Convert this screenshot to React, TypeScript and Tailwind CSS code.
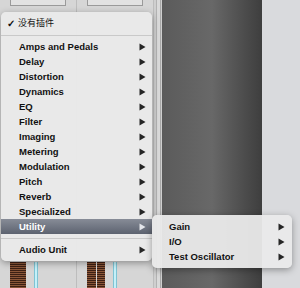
import React from "react";

const FONT = { fontFamily: '"Liberation Sans", Arial, sans-serif' };
const CJK = { fontFamily: '"Liberation Sans", "Noto Sans CJK SC", sans-serif' };

function Arrow({ light }: { light?: boolean }) {
  return (
    <svg width="7" height="8" viewBox="0 0 7 8" className="shrink-0">
      <polygon points="0.5,0.5 6.5,4 0.5,7.5" fill={light ? "#e4e6ea" : "#262626"} />
    </svg>
  );
}

function Item({ label, active, sub }: { label: string; active?: boolean; sub?: boolean }) {
  return (
    <div
      className={
        "flex h-[15px] items-center justify-between text-[9.5px] font-bold " +
        (sub ? "pl-[17px] pr-[7px] " : "pl-[18px] pr-[6px] ") +
        (active
          ? "bg-gradient-to-b from-[#878c97] to-[#5d6370] text-white"
          : "text-[#111111]")
      }
      style={FONT}
    >
      <span className="leading-none">{label}</span>
      <Arrow light={active} />
    </div>
  );
}

function Sep() {
  return (
    <div className="flex h-[8px] items-center">
      <div className="h-px w-full bg-[#c9c9c9]" />
    </div>
  );
}

function Meter({ w }: { w: string }) {
  return (
    <div
      className={"h-full " + w}
      style={{
        backgroundImage:
          "repeating-linear-gradient(to bottom, #3c2014 0px, #3c2014 1px, #8a5638 1px, #8a5638 2px)",
      }}
    />
  );
}

function Strip({ meters }: { meters: number }) {
  return (
    <div className="flex h-full w-[77px] flex-col justify-between border-r border-[#bdbdbd]">
      <div className="flex flex-col items-start pl-[10px]">
        <div className="h-[6px] w-[56px] border-x border-b border-[#9a9a9a] bg-[#e2e2e2]" />
      </div>
      <div className="flex h-[26px] items-stretch gap-[8px] pl-[10px]">
        <div className="flex gap-[1px]">
          {meters === 1 ? (
            <Meter w="w-[16px]" />
          ) : (
            <>
              <Meter w="w-[9px]" />
              <Meter w="w-[8px]" />
            </>
          )}
        </div>
        <div className="w-[4px] border-x border-[#7fc3d3] bg-[#c4f0f8]" />
      </div>
    </div>
  );
}

export default function App() {
  return (
    <div className="relative h-[288px] w-[300px] overflow-hidden bg-[#d5d5d5]">
      {/* background */}
      <div className="flex h-full w-full">
        <div className="flex h-full w-[154px] bg-[#d6d6d6]">
          <Strip meters={1} />
          <Strip meters={2} />
        </div>
        <div className="flex h-full w-[8px] bg-[#cfcfcf]">
          <div className="w-[2px]" />
          <div className="w-px bg-[#b3b3b3]" />
          <div className="w-[3px] bg-[#dadada]" />
          <div className="w-px bg-[#a8a8a8]" />
        </div>
        <div className="h-full w-[100px] bg-gradient-to-r from-[#5b5b5b] via-[#686868] to-[#3e3e3e]" />
        <div className="h-full flex-1 bg-[#d9dadd]" />
      </div>

      {/* main menu */}
      <div className="absolute left-[1px] top-[12px] w-[151px] rounded-[5px] bg-[#eaeaea]/95 py-[4px] shadow-[0_2px_7px_rgba(0,0,0,0.35)]">
        <div className="flex h-[15px] items-center text-[9px] text-[#111111]" style={CJK}>
          <span className="w-[17px] pl-[6px] text-[10px] font-bold" style={FONT}>✓</span>
          <span className="leading-none">没有插件</span>
        </div>
        <Sep />
        {[
          "Amps and Pedals",
          "Delay",
          "Distortion",
          "Dynamics",
          "EQ",
          "Filter",
          "Imaging",
          "Metering",
          "Modulation",
          "Pitch",
          "Reverb",
          "Specialized",
        ].map((l) => (
          <Item key={l} label={l} />
        ))}
        <Item label="Utility" active />
        <Sep />
        <Item label="Audio Unit" />
      </div>

      {/* submenu */}
      <div className="absolute left-[152px] top-[215px] w-[140px] rounded-[5px] bg-[#eaeaea]/95 py-[4px] shadow-[0_2px_7px_rgba(0,0,0,0.35)]">
        <Item label="Gain" sub />
        <Item label="I/O" sub />
        <Item label="Test Oscillator" sub />
      </div>
    </div>
  );
}
